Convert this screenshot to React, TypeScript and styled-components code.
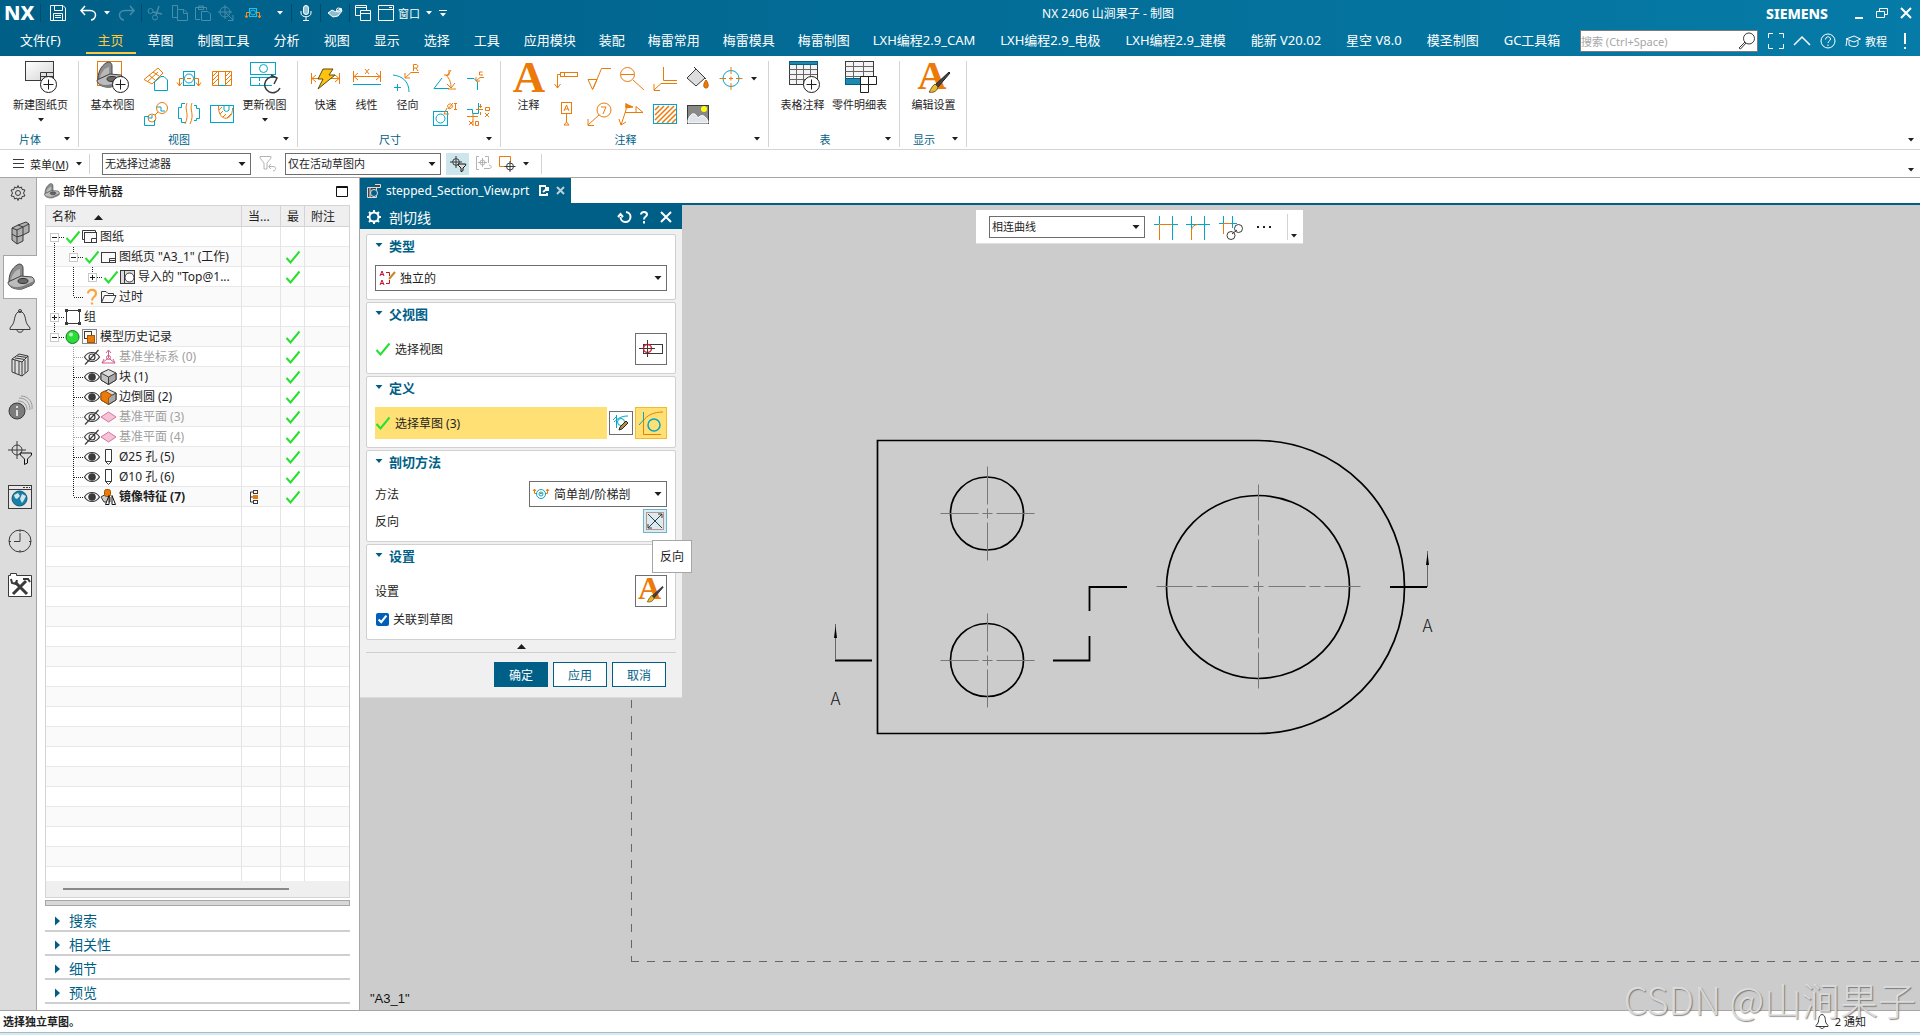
import React from 'react';
import styled, { createGlobalStyle, css } from 'styled-components';

const ORANGE = '#ec7a08';
const CYAN = '#00a5cc';
const INK = '#3a3a3a';
const BRAND = '#005f87';
const GREEN = '#25e02f';

const GlobalStyle = createGlobalStyle`
  *, *::before, *::after { box-sizing: border-box; }
  body { margin: 0; background: #fff; overflow: hidden; }
  body, button, input, select, table {
    font-family: "Noto Sans", "Noto Sans CJK SC", sans-serif;
    font-size: 12px;
    color: #1e1e1e;
  }
  button { border: 0; padding: 0; background: none; white-space: nowrap; }
  svg { display: block; flex: none; fill: none; stroke: currentColor; overflow: visible; }
`;

/* ---------- icons ---------- */

type IconProps = { w?: number; h?: number; c?: string; sw?: number; children: React.ReactNode };

const Icon = ({ w = 24, h, c = INK, sw = 1, children }: IconProps) => (
  <svg width={w} height={h ?? w} viewBox={`0 0 ${w} ${h ?? w}`} color={c} strokeWidth={sw} aria-hidden="true">
    {children}
  </svg>
);

const Caret = ({ wide = false, c = '#1e1e1e' }: { wide?: boolean; c?: string }) => (
  <Icon w={8} h={4} c={c}>
    <path d={wide ? 'M0.5 0H7.5L4 4Z' : 'M1 0H7L4 3.5Z'} fill={c} stroke="none" />
  </Icon>
);

const Check = () => (
  <Icon w={16} c={GREEN} sw={2}>
    <path d="M1.5 9L5.5 13.5L14.5 2.5" />
  </Icon>
);

const SerifA = ({ x, y, size }: { x: number; y: number; size: number }) => (
  <text x={x} y={y} fontSize={size} fontFamily="Liberation Serif, serif" fontWeight="700" fill={ORANGE} stroke="none" textAnchor="middle">A</text>
);

const Brush = () => (
  <>
    <path d="M32 11L18 24L21 26L33 12Z" fill="#444" stroke="#222" />
    <path d="M18 23L21 26C20 31 15 32 12 31C14 29 14 26 18 23Z" fill="#e6b93a" stroke="#6b5310" />
  </>
);

const Bracket = () => (
  <>
    <path d="M2 18C2 9 7 3 12 1C15 1 16 3 16 5V14L4 20Z" fill="#8e8e8e" stroke="#444" />
    <path d="M4 17C5 11 9 7 13 6V13Z" fill="#b8b8b8" stroke="none" />
    <path d="M1 19L14 13L25 14C28 16 28 20 25 22L15 26C8 27 1 24 1 19Z" fill="#bcbcbc" stroke="#444" />
    <path d="M1 19C2 24 10 25 16 23L27 18C28 20 27 21 25 22L15 26C8 27 1 24 1 19Z" fill="#7d7d7d" stroke="none" />
    <ellipse cx="16" cy="18" rx="5" ry="2.5" fill="#6a6a6a" stroke="#333" />
  </>
);

const PlusBadge = ({ x, y }: { x: number; y: number }) => (
  <>
    <circle cx={x} cy={y} r="8" fill="#fff" stroke="#1e1e1e" />
    <path d={`M${x - 5} ${y}H${x + 5}M${x} ${y - 5}V${y + 5}`} stroke="#1e1e1e" />
  </>
);

const big = {
  sheet: (
    <Icon w={34}>
      <defs>
        <linearGradient id="sheetFill" x1="0" y1="0" x2="1" y2="1">
          <stop offset="0" stopColor="#fff" /><stop offset="1" stopColor="#d4d4d4" />
        </linearGradient>
      </defs>
      <rect x="1.5" y="0.5" width="28" height="19" fill="url(#sheetFill)" />
      <path d="M16.5 19.5V11.5H29.5M16.5 15.5H29.5M22.5 11.5V19.5" />
      <PlusBadge x={24.5} y={23.5} />
    </Icon>
  ),
  base: (
    <Icon w={34}>
      <rect x="1.5" y="0.5" width="24" height="24" stroke={ORANGE} />
      <Bracket />
      <PlusBadge x={24.5} y={23.5} />
    </Icon>
  ),
  update: (
    <Icon w={34} c={CYAN}>
      <rect x="2.5" y="1.5" width="25" height="12" /><circle cx="15.5" cy="7.5" r="4" />
      <path d="M24 24.5H2.5V16.5H27" /><path d="M11.5 17V24" strokeDasharray="3 2" />
      <path d="M29 17A8 8 0 1 0 32 27M23 14L29 17L26 23" stroke={INK} strokeWidth="1.5" />
    </Icon>
  ),
  rapid: (
    <Icon w={34} c={ORANGE}>
      <path d="M2.5 12V23M30.5 12V23M3 17.5H30M7 14L3 17.5L7 21M26 14L30 17.5L26 21" />
      <path d="M14 8H24L20 14H26L9 28L14 18H9Z" fill="#ffc20e" stroke="#5a4a10" />
    </Icon>
  ),
  linear: (
    <Icon w={34} c={ORANGE}>
      <path d="M3.5 10V21M30.5 10V21M4 15.5H30M8 12L4 15.5L8 19M26 12L30 15.5L26 19M15 8L19 13M19 8L15 13" />
      <path d="M3 23.5H31" stroke={CYAN} />
    </Icon>
  ),
  radial: (
    <Icon w={34} c={CYAN}>
      <path d="M2 14C11 15 18 20 18 31M3 26.5H10M6.5 23V30" />
      <path d="M28 11.5H20L14 17M14 12V17H19M22.5 10V3.5H25C27.5 3.5 27.5 7 25 7H22.5M25 7L27 10" stroke={ORANGE} />
    </Icon>
  ),
  note: <Icon w={34}><SerifA x={17} y={31} size={45} /></Icon>,
  tableNote: (
    <Icon w={34}>
      <rect x="3.5" y="0.5" width="28" height="23" fill="#f4f4f4" />
      <rect x="3.5" y="0.5" width="28" height="3" fill="#1f88b0" stroke={BRAND} />
      <path d="M3.5 8.5H31M3.5 13.5H31M3.5 18.5H31M10.5 4V23M17.5 4V23M24.5 4V23" stroke="#666" />
      <PlusBadge x={25.5} y={23.5} />
    </Icon>
  ),
  parts: (
    <Icon w={34}>
      <rect x="2.5" y="0.5" width="28" height="23" fill="#f4f4f4" />
      <rect x="2.5" y="17.5" width="16" height="6" fill="#1f88b0" stroke={BRAND} />
      <path d="M2.5 5.5H30M2.5 10.5H30M2.5 15.5H30M10.5 0V17M20.5 0V15" stroke="#666" />
      <path d="M17.5 15.5H33.5V23.5H25.5V31.5H17.5ZM25.5 15.5V23.5H17.5" fill="#fff" stroke="#1e1e1e" />
    </Icon>
  ),
  edit: <Icon w={34}><SerifA x={15} y={28} size={40} /><Brush /></Icon>,
};

const viewIcons = [
  <Icon c={ORANGE}><path d="M0 12.5L14 1L19 6L8 17ZM5 8L11 13M9 5L15 9M3 15L14 5" /><path d="M10.5 23.5V15L17 9.5H20L23.5 13V23.5Z" fill="#fff" stroke={CYAN} /></Icon>,
  <Icon c={CYAN}><rect x="6.5" y="4.5" width="11" height="14" /><circle cx="12" cy="11.5" r="4.5" /><path d="M8 11.5H2.5V19M0 15.5L2.5 19L5 15.5M16 11.5H21.5V19M19 15.5L21.5 19L24 15.5M10 11.5H14" stroke={ORANGE} /></Icon>,
  <Icon c={ORANGE}><path d="M2.5 4.5H21.5V18.5H15.5V4.5M2.5 4.5V18.5H8.5V4.5M3 9L7 5M3 13L8 8M3 17L8 12M16 9L20 5M16 13L21 8M16 17L21 12" /><path d="M8 18.5H16" stroke={CYAN} /></Icon>,
  <Icon c={ORANGE}><circle cx="8" cy="16" r="4" /><circle cx="18" cy="6" r="5.5" /><path d="M11 13L14 10" /><path d="M5 14.5H0.5V23.5H10.5V18M8 13V16H4M13 5H17V9H21" stroke={CYAN} /></Icon>,
  <Icon c={CYAN}><path d="M8 1.5H4.5V5.5H1.5V16.5H4.5V20.5H9M17 3.5H19.5V6.5H22.5V16.5H19.5V18.5H17" /><path d="M10 1C7 8 13 12 8 22M15 1C12 8 18 12 13 22" stroke={ORANGE} /></Icon>,
  <Icon c={CYAN}><rect x="0.5" y="3.5" width="23" height="17" /><path d="M14 3.5V8A3 3 0 0 0 19 8V3.5" /><path d="M8.5 4C8 20 23 20 22.5 6M9 8L12 5M10 12L13 9M13 15L16 12M17 16L21 12" stroke={ORANGE} /></Icon>,
];

const dimensionIcons = [
  <Icon c={CYAN}><path d="M9 11L1 21.5H16" /><path d="M13 8C17 12 18 16 18 21M11 8H16V3M14 17L18 21L22 16M15 22H23M14 9L18 3" stroke={ORANGE} /></Icon>,
  <Icon c={CYAN}><path d="M1 11.5H8L11.5 15V23" /><path d="M18 10.5H14L10 14M10 10V14H14M16.5 5H13.5V8H17" stroke={ORANGE} /></Icon>,
  <Icon c={CYAN}><rect x="0.5" y="9.5" width="14" height="14" /><circle cx="7.5" cy="16.5" r="4.5" /><path d="M14 6L11 12H16M15 5.5A2 2 0 1 0 19 3A2 2 0 1 0 15 5.5M15 7L20 1M22.5 1V7M21 1.5H24M21 7.5H24" stroke={ORANGE} /></Icon>,
  <Icon c={CYAN}><path d="M1 7.5H6.5V11.5H12.5V1" /><path d="M13 4.5H16M10 7.5H17M14.5 2V6M14.5 10V13M1 14.5H12M7 12V24M3 19L7 23M7 19L3 23M9.5 19.5H12.5V23.5H9.5ZM19.5 5.5H23.5V8.5H19.5ZM19 11L23 15M23 11L19 15" stroke={ORANGE} /></Icon>,
];

const noteIcons = [
  <Icon c={ORANGE}><path d="M3.5 21V7.5H6.5M0.5 17L3.5 21L6.5 17" /><rect x="6.5" y="5.5" width="17" height="4" /><path d="M10.5 5V10" /></Icon>,
  <Icon c={ORANGE}><path d="M1 12.5H10L5.5 22.5ZM6 22L14.5 1.5H24" /></Icon>,
  <Icon c={ORANGE}><circle cx="7.5" cy="7.5" r="7" /><path d="M1 7.5H14M13 13L24 23" /></Icon>,
  <Icon c={ORANGE}><path d="M10.5 0V13.5H24M24 16.5H8L1 23M1 17V23.5H7" /></Icon>,
  <Icon><path d="M10 2L19 11L10 19L1 11Z" fill="#ddd" /><path d="M8 0L20 12" /><path d="M20 13C23 17 23 21 20 21C17 21 17 17 20 13Z" fill={ORANGE} stroke="#c65a00" /></Icon>,
  <Icon c={CYAN}><circle cx="12" cy="11.5" r="8" /><path d="M12 0V7M12 16V23M0.5 11.5H7M17 11.5H23.5M10 11.5H14M12 9.5V13.5" stroke={ORANGE} /></Icon>,
  <Icon c={ORANGE}><rect x="7.5" y="0.5" width="10" height="11" /><path d="M10 9L12.5 3L15 9M11 7H14M12.5 12V20M10 23L12.5 20L15 23Z" /></Icon>,
  <Icon c={ORANGE}><circle cx="17" cy="8" r="7" /><path d="M14 5H19L16 12M12 13L1 23M1 17V23.5H7" /></Icon>,
  <Icon c={ORANGE}><path d="M6 2L13 5L6 6Z" fill={ORANGE} /><path d="M6 1V8L1 23M-1 17L1 23L6 20M5 10.5H23L16 4.5V10" /></Icon>,
  <Icon c={ORANGE}><path d="M2 8L6 4M2 13L11 4M2 18L16 4M4 21L21 4M9 21L23 7M14 21L23 12M19 21L23 17" strokeWidth="1.5" /><rect x="0.5" y="2.5" width="23" height="19" stroke={CYAN} /></Icon>,
  <Icon><rect x="1.5" y="3.5" width="21" height="18" fill="#888" /><circle cx="18" cy="7" r="3" fill="#ff0" stroke="none" /><path d="M2 18C6 8 10 12 12 16C15 12 19 13 22 19V21H2Z" fill="#dfe4ea" stroke="#fff" /></Icon>,
];

/* ---------- title bar ---------- */

const Page = styled.div`
  height: 100vh;
  display: flex;
  flex-direction: column;
`;

const Header = styled.header`
  flex: none;
  background: linear-gradient(90deg, #005f87, #067ba7);
  color: #fff;
`;

const QuickRow = styled.div`
  height: 26px;
  display: flex;
  align-items: center;
  padding-left: 4px;
`;

const Logo = styled.strong`
  width: 36px;
  font-size: 20px;
  font-weight: 800;
  line-height: 26px;
`;

const Divider = styled.span<{ $h?: number; $dark?: boolean; $gap?: number }>`
  width: 1px;
  height: ${p => p.$h ?? 18}px;
  flex: none;
  margin: 0 ${p => p.$gap ?? 0}px;
  background: ${p => (p.$dark ? '#004a6b' : '#d4d4d4')};
`;

const QuickButton = styled.button<{ $dim?: boolean; $w?: number }>`
  width: ${p => p.$w ?? 23}px;
  height: 24px;
  display: flex;
  align-items: center;
  justify-content: center;
  gap: 4px;
  color: #fff;
  font-size: 11px;
  opacity: ${p => (p.$dim ? 0.28 : 1)};
`;

const WindowTitle = styled.h1`
  flex: 1;
  margin: 0;
  font-size: 12px;
  font-weight: 400;
  text-align: center;
`;

const Siemens = styled.strong`
  width: 76px;
  padding-top: 2px;
  font-size: 14px;
  line-height: 18px;
  font-weight: 800;
`;

const MenuRow = styled.nav`
  height: 30px;
  display: flex;
  align-items: center;
  padding-left: 8px;
`;

const MenuTab = styled.button<{ $active?: boolean; $file?: boolean; $end?: number }>`
  height: 28px;
  align-self: flex-start;
  padding: 0 ${p => p.$end ?? 12}px 0 12px;
  margin-right: ${p => (p.$file ? 13 : 0)}px;
  font-size: 13px;
  color: ${p => (p.$active ? '#ffc843' : '#fff')};
  border-bottom: 2px solid ${p => (p.$active ? '#ffc843' : 'transparent')};
`;

const SearchBox = styled.label`
  width: 178px;
  height: 22px;
  margin-left: auto;
  display: flex;
  align-items: center;
  background: #fff;
  border: 1px solid #7a7a7a;
  color: ${INK};
  input {
    flex: 1;
    min-width: 0;
    padding: 0;
    border: 0;
    outline: 0;
    font-size: 11px;
  }
  input::placeholder { color: #a6a6a6; opacity: 1; }
`;

const HeaderTools = styled.div`
  width: 162px;
  display: flex;
  align-items: center;
  padding-left: 5px;
`;

const W = ({ w = 16, children }: { w?: number; children: React.ReactNode }) => <Icon w={w} h={16} c="#fff">{children}</Icon>;

const basicMenus = ['草图', '制图工具', '分析', '视图', '显示', '选择', '工具'];
const moduleMenus = ['应用模块', '装配', '梅雷常用', '梅雷模具', '梅雷制图'];
const pluginMenus = ['LXH编程2.9_CAM', 'LXH编程2.9_电极', 'LXH编程2.9_建模', '能新 V20.02', '星空 V8.0', '模圣制图', 'GC工具箱'];

const TitleBar = () => (
  <Header>
    <QuickRow>
      <Logo>NX</Logo>
      <Divider $dark />
      <QuickButton $w={34} aria-label="保存"><W><path d="M0.5 0.5H13L15.5 3V15.5H0.5ZM4.5 1V5.5H12.5V1M3.5 15V8.5H12.5V15M5 10.5H11M5 12.5H11" /></W></QuickButton>
      <QuickButton $w={26} aria-label="撤销"><W><path d="M5 1L1 5.5L5 10M1 5.5H10C14 5.5 15.5 8 15.5 10C15.5 13 13 15 11 15" strokeWidth="1.5" /></W></QuickButton>
      <QuickButton $w={12} aria-label="撤销列表"><Caret c="#fff" /></QuickButton>
      <QuickButton $w={28} $dim aria-label="重做"><W><path d="M11 1L15 5.5L11 10M15 5.5H6C2 5.5 0.5 8 0.5 10C0.5 13 3 15 5 15" strokeWidth="1.5" /></W></QuickButton>
      <Divider $dark />
      <QuickButton $w={26} $dim aria-label="剪切"><W><circle cx="3.5" cy="6" r="2.5" /><circle cx="8" cy="12.5" r="2.5" /><path d="M6 7L15 9M9 10L12 1" strokeWidth="1.5" /></W></QuickButton>
      <QuickButton $dim aria-label="复制"><W><path d="M5.5 4V0.5H0.5V12.5H5M5.5 4.5H12L15.5 8V15.5H5.5ZM11.5 5V8.5H15" /></W></QuickButton>
      <QuickButton $dim aria-label="粘贴"><W><path d="M5 14.5H0.5V2.5H11.5V5M3.5 4.5V1H8.5V4.5ZM6.5 6.5H13L15.5 9V15.5H6.5Z" /></W></QuickButton>
      <QuickButton $dim aria-label="移动"><W><circle cx="7" cy="7" r="5" /><path d="M7 0V14M0 7H14M8 8L15 15M15 10V15.5H10" /></W></QuickButton>
      <QuickButton $w={32} aria-label="剖切线">
        <Icon w={16} c="#19c3ec"><rect x="4.5" y="3.5" width="7" height="8" /><circle cx="8" cy="7.5" r="2.5" /><path d="M5 7.5H1.5V13M0 10.5L1.5 13L3 10.5M11 7.5H14.5V13M13 10.5L14.5 13L16 10.5" stroke="#ff8a1c" /></Icon>
      </QuickButton>
      <QuickButton $w={22} aria-label="剖切线列表"><Caret c="#fff" /></QuickButton>
      <Divider $dark />
      <QuickButton $w={28} aria-label="语音"><W w={12}><rect x="3.5" y="0.5" width="5" height="9" rx="2.5" fill="#9cc3d3" /><path d="M1 6V8C1 13 11 13 11 8V6M6 12V15M3 15.5H9" /></W></QuickButton>
      <Divider $dark />
      <QuickButton $w={28} aria-label="触控"><W><path d="M1 8L5 5L9 7L14 3L15 6L11 11L6 12Z" fill="#8fbccd" /><circle cx="11.5" cy="5" r="2" /></W></QuickButton>
      <Divider $dark />
      <QuickButton $w={26} aria-label="切换窗口"><W><path d="M5 10.5H0.5V0.5H11.5V5M0.5 2.5H11M9 15.5H5.5V5.5H15.5V15.5H9M5.5 8.5H15" /></W></QuickButton>
      <QuickButton $w={46}><W><path d="M0.5 0.5H15.5V15.5H0.5ZM0.5 4.5H15M11 2.5H14" /></W>窗口</QuickButton>
      <QuickButton $w={14} aria-label="窗口列表"><Caret c="#fff" /></QuickButton>
      <QuickButton $w={14} aria-label="自定义"><Icon w={8} h={7} c="#fff"><path d="M0 0.5H8" /><path d="M1 3H7L4 6.5Z" fill="#fff" stroke="none" /></Icon></QuickButton>
      <WindowTitle>NX 2406 山涧果子 - 制图</WindowTitle>
      <Siemens>SIEMENS</Siemens>
      <QuickButton $w={30} aria-label="最小化"><Icon w={12} c="#fff" sw={2}><path d="M4 11H12" /></Icon></QuickButton>
      <QuickButton $w={20} aria-label="还原"><Icon w={12} c="#fff"><path d="M3.5 4V1.5H11.5V7.5H8.5M0.5 4.5H8.5V10.5H0.5Z" /></Icon></QuickButton>
      <QuickButton $w={28} aria-label="关闭"><Icon w={12} c="#fff" sw={2}><path d="M1 1L11 11M11 1L1 11" /></Icon></QuickButton>
    </QuickRow>
    <MenuRow>
      <MenuTab $file>文件(F)</MenuTab>
      <MenuTab $active>主页</MenuTab>
      {basicMenus.map(m => <MenuTab key={m}>{m}</MenuTab>)}
      {moduleMenus.map(m => <MenuTab key={m} $end={11}>{m}</MenuTab>)}
      {pluginMenus.map(m => <MenuTab key={m} $end={13}>{m}</MenuTab>)}
      <SearchBox>
        <input type="text" placeholder="搜索 (Ctrl+Space)" aria-label="搜索" />
        <Icon w={20} h={18}><circle cx="12" cy="6.5" r="5.5" /><path d="M8 10L2 16L3.5 17L9 11" /></Icon>
      </SearchBox>
      <HeaderTools>
        <QuickButton $w={26} aria-label="全屏"><W><path d="M0.5 5V0.5H5M11 0.5H15.5V5M15.5 11V15.5H11M5 15.5H0.5V11" /></W></QuickButton>
        <QuickButton $w={26} aria-label="折叠功能区"><W><path d="M0 12L8 4L16 12" strokeWidth="1.5" /></W></QuickButton>
        <QuickButton $w={26} aria-label="帮助"><W><circle cx="8" cy="8" r="7" /><path d="M5.5 6.5C5.5 3 10.5 3 10.5 6C10.5 8 8 8 8 10M8 11.5V13" /></W></QuickButton>
        <QuickButton $w={50}><W><path d="M1 6L9 3L15.5 6L9 9ZM4 8V12C7 14 11 14 13 12V8M2 7L1 13" /></W>教程</QuickButton>
        <QuickButton $w={28} aria-label="提醒"><Icon w={4} h={16} c="#fff" sw={2}><path d="M2 0V11M2 14V16" /></Icon></QuickButton>
      </HeaderTools>
    </MenuRow>
  </Header>
);

/* ---------- ribbon ---------- */

const Ribbon = styled.section`
  flex: none;
  height: 94px;
  display: flex;
  padding: 5px 0 2px;
  border-bottom: 1px solid #d4d4d4;
`;

const Group = styled.div`
  display: flex;
  flex-direction: column;
  justify-content: space-between;
  border-right: 1px solid #d4d4d4;
`;

const GroupBody = styled.div<{ $pad: string }>`
  display: flex;
  align-items: flex-start;
  padding: ${p => p.$pad};
`;

const GroupCaption = styled.div`
  display: flex;
  align-items: center;
  height: 16px;
  color: ${BRAND};
  font-size: 11px;
  span { flex: 1; text-align: center; }
  button { width: 18px; height: 16px; display: flex; align-items: center; padding-left: 3px; }
`;

const BigButton = styled.button<{ $w: number }>`
  width: ${p => p.$w}px;
  height: 68px;
  display: flex;
  flex-direction: column;
  align-items: center;
  font-size: 11px;
  line-height: 16px;
  span { margin: 2px 0 5px; }
`;

const IconGrid = styled.div<{ $cols: number }>`
  display: grid;
  grid-template-columns: repeat(${p => p.$cols}, 33px);
  grid-auto-rows: 35px;
  button { display: grid; place-items: center; }
`;

const GridMore = styled.button`
  width: 14px;
  height: 35px;
  display: grid;
  place-items: center;
`;

const CornerArrow = styled.button`
  margin-left: auto;
  padding: 0 5px 5px 0;
  align-self: flex-end;
`;

type RibbonGroupProps = { title: string; pad: string; children: React.ReactNode };
const RibbonGroup = ({ title, pad, children }: RibbonGroupProps) => (
  <Group>
    <GroupBody $pad={pad}>{children}</GroupBody>
    <GroupCaption><span>{title}</span><button aria-label={`${title}选项`}><Caret /></button></GroupCaption>
  </Group>
);

const Tool = ({ w, icon, label, more }: { w: number; icon: React.ReactNode; label: string; more?: boolean }) => (
  <BigButton $w={w}>{icon}<span>{label}</span>{more && <Caret />}</BigButton>
);

const Icons = ({ cols, items, name }: { cols: number; items: React.ReactNode[]; name: string }) => (
  <IconGrid $cols={cols}>
    {items.map((icon, i) => <button key={i} aria-label={`${name} ${i + 1}`}>{icon}</button>)}
  </IconGrid>
);

const RibbonBar = () => (
  <Ribbon>
    <RibbonGroup title="片体" pad="0 7px 0 10px">
      <Tool w={61} icon={big.sheet} label="新建图纸页" more />
    </RibbonGroup>
    <RibbonGroup title="视图" pad="0 6px 0 7px">
      <Tool w={53} icon={big.base} label="基本视图" />
      <Icons cols={3} items={viewIcons} name="视图工具" />
      <Tool w={53} icon={big.update} label="更新视图" more />
    </RibbonGroup>
    <RibbonGroup title="尺寸" pad="0 6px 0 7px">
      <Tool w={41} icon={big.rapid} label="快速" />
      <Tool w={41} icon={big.linear} label="线性" />
      <Tool w={41} icon={big.radial} label="径向" />
      <Icons cols={2} items={dimensionIcons} name="尺寸工具" />
    </RibbonGroup>
    <RibbonGroup title="注释" pad="0 7px 0 7px">
      <Tool w={41} icon={big.note} label="注释" />
      <Icons cols={6} items={noteIcons} name="注释工具" />
      <GridMore aria-label="中心标记列表"><Caret /></GridMore>
    </RibbonGroup>
    <RibbonGroup title="表" pad="0 9px 0 7px">
      <Tool w={53} icon={big.tableNote} label="表格注释" />
      <Tool w={61} icon={big.parts} label="零件明细表" />
    </RibbonGroup>
    <RibbonGroup title="显示" pad="0 6px 0 7px">
      <Tool w={53} icon={big.edit} label="编辑设置" />
    </RibbonGroup>
    <CornerArrow aria-label="功能区选项"><Caret /></CornerArrow>
  </Ribbon>
);

/* ---------- selection bar ---------- */

const FilterBar = styled.section`
  flex: none;
  height: 28px;
  display: flex;
  align-items: center;
  padding-left: 13px;
  border-bottom: 1px solid #a6a6a6;
`;

const MenuButton = styled.button`
  width: 76px;
  display: flex;
  align-items: center;
  gap: 6px;
  font-size: 11px;
`;

const SelectFrame = styled.div<{ $w?: number; $h?: number; $icon?: boolean }>`
  position: relative;
  width: ${p => (p.$w ? `${p.$w}px` : '100%')};
  height: ${p => p.$h ?? 22}px;
  flex: none;
  select {
    width: 100%;
    height: 100%;
    appearance: none;
    border: 1px solid #6e6e6e;
    border-radius: 0;
    background: #fff;
    font-size: ${p => (p.$h ? 12 : 11)}px;
    padding: 0 18px 0 ${p => (p.$icon ? 24 : 2)}px;
  }
`;

const SelectMark = styled.span<{ $left?: boolean }>`
  position: absolute;
  top: 0;
  bottom: 0;
  ${p => (p.$left ? css`left: 4px;` : css`right: 5px;`)}
  display: flex;
  align-items: center;
  pointer-events: none;
`;

type DropProps = { w?: number; h?: number; value: string; label: string; id?: string; icon?: React.ReactNode };
const Drop = ({ w, h, value, label, id, icon }: DropProps) => (
  <SelectFrame $w={w} $h={h} $icon={!!icon}>
    <select id={id} aria-label={label}><option>{value}</option></select>
    {icon && <SelectMark $left>{icon}</SelectMark>}
    <SelectMark><Caret wide /></SelectMark>
  </SelectFrame>
);

const FlatButton = styled.button<{ $w: number; $on?: boolean }>`
  width: ${p => p.$w}px;
  height: 22px;
  display: grid;
  place-items: center;
  background: ${p => (p.$on ? '#cde6eb' : 'none')};
`;

const Funnel = ({ size = 16, c = INK }: { size?: number; c?: string }) => (
  <svg width={size} height={size} viewBox="0 0 24 24" color={c} strokeWidth={size > 20 ? 1 : 1.5} aria-hidden="true">
    <path d="M9 0V18M0 9H18" /><circle cx="9" cy="9" r="5" />
    <path d="M12 12H23.5V14L19.5 18V22L16.5 23.5V18L12.5 14Z" fill="#ddd" stroke="#111" />
  </svg>
);

const SelectionBar = () => (
  <FilterBar>
    <MenuButton>
      <Icon w={11}><path d="M0 1.5H11M0 5.5H11M0 9.5H11" /></Icon>
      <span>菜单(<u>M</u>)</span>
      <Caret />
    </MenuButton>
    <Divider $h={20} />
    <FlatButton as="span" $w={12} />
    <Drop w={149} value="无选择过滤器" label="选择过滤器" />
    <FlatButton $w={34} aria-label="重置过滤器"><Icon w={18} c="#b4b4b4"><path d="M1 1.5H12V3L8 8V14H5V8L1 3ZM10 11.5H14C18 11.5 17 16 14 16M12 9L9.5 11.5L12 14" /></Icon></FlatButton>
    <Drop w={156} value="仅在活动草图内" label="选择范围" />
    <FlatButton as="span" $w={5} />
    <FlatButton $w={23} $on aria-label="捕捉过滤"><Funnel /></FlatButton>
    <FlatButton $w={28} aria-label="整体选择"><Icon w={17} c="#b4b4b4"><path d="M4 1.5H1.5V14.5H4M10 1.5H13.5V8M7.5 3V12M3 7.5H12M9 13.5H14C17 13.5 17 10 14 10" /><circle cx="7.5" cy="7.5" r="2.5" /></Icon></FlatButton>
    <FlatButton $w={20} aria-label="选择点"><Icon w={18}><path d="M7 11.5H1.5V1.5H12.5V7" stroke={ORANGE} /><circle cx="12" cy="11.5" r="3.5" /><path d="M12 6V17M6.5 11.5H17.5" /></Icon></FlatButton>
    <FlatButton $w={18} aria-label="更多"><Caret /></FlatButton>
    <Divider $h={20} $gap={6} />
    <CornerArrow aria-label="选择条选项"><Caret /></CornerArrow>
  </FilterBar>
);

/* ---------- resource bar ---------- */

const Main = styled.main`
  flex: 1;
  min-height: 0;
  display: flex;
`;

const Resource = styled.aside`
  width: 37px;
  flex: none;
  display: flex;
  flex-direction: column;
  background: #dcdcdc;
  border-right: 1px solid #a6a6a6;
`;

const ResourceButton = styled.button<{ $small?: boolean; $on?: boolean }>`
  height: ${p => (p.$small ? 33 : 44)}px;
  display: grid;
  place-items: center;
  padding: ${p => (p.$small ? '0 0 4px' : '0 0 0 3px')};
  ${p => p.$on && css`
    background: #fff;
    border: 1px solid #a6a6a6;
    border-right: 0;
    margin: 0 -1px 0 3px;
    padding: 0;
  `}
`;

const gear = 'M8 0.5L9 3L11.5 2L12 4.5L15 5L13.5 8L15 11L12 11.5L11.5 14L9 13L8 15.5L7 13L4.5 14L4 11.5L1 11L2.5 8L1 5L4 4.5L4.5 2L7 3Z';

const resources: [string, React.ReactNode][] = [
  ['设置', <Icon w={16}><path d={gear} /><circle cx="8" cy="8" r="2.5" /></Icon>],
  ['装配导航器', <Icon w={24}><path d="M4 7L10 4L18 1L21 3V11L15 14V20L9 23L4 19Z" fill="#b0b0b0" /><path d="M4 7L9 9L21 3M9 9V23M15 6V14L9 16L4 13M10 4L15 6" /></Icon>],
  ['部件导航器', <Icon w={28}><Bracket /></Icon>],
  ['通知', <Icon w={24}><path d="M12 2.5C6 3 7 12 5 15L2 19V20.5H22V19L19 15C17 12 18 3 12 2.5ZM9 21C9 24 15 24 15 21" /><circle cx="12" cy="2" r="1.5" /></Icon>],
  ['重用库', <Icon w={24}><path d="M4 6L11 1L20 3V18L14 23L4 19ZM4 6L14 9V23M14 9L20 3M7 5L17 6.5M9 3L19 4.5M7 7V20M11 8V22M17 7V20" /></Icon>],
  ['信息', <Icon w={26}><circle cx="10" cy="15" r="8" fill="#7c7c7c" /><path d="M10 10V12M10 14V20" stroke="#fff" strokeWidth="1.5" /><path d="M11 5C17 5 20 9 20 14M12 2C20 2 23 8 23 14M14 0C22 0 26 7 25 13" stroke="#999" /></Icon>],
  ['选择过滤', <Funnel size={24} />],
  ['浏览器', <Icon w={24}><rect x="0.5" y="0.5" width="23" height="23" fill="#e8e8e8" /><path d="M0.5 4.5H23M15 2.5H17M18 2.5H20M21 2.5H22" /><circle cx="11.5" cy="13.5" r="7.5" fill="#1880a8" stroke="#145a78" /><path d="M6 10L10 8L12 11L9 14L7 13ZM14 9L18 11L16 15L14 18L12 14Z" fill="#d3e6ee" stroke="none" /></Icon>],
  ['历史', <Icon w={24}><circle cx="12" cy="12" r="11" /><path d="M12 4V12.5H6M12 1V3M12 21V23M1 12.5H3M21 12.5H23" /></Icon>],
  ['工具', <Icon w={24}><path d="M0.5 23.5V2.5H2.5V0.5H8.5V2.5H23.5V23.5Z" fill="#fff" /><path d="M7 9L19 21M18 8L5 21" strokeWidth="3" /><path d="M3 6L4 10L8 11L9 7M15 6H20L22 9" strokeWidth="2" /></Icon>],
];

/* ---------- part navigator ---------- */

const Navigator = styled.section`
  width: 323px;
  flex: none;
  display: flex;
  flex-direction: column;
  padding: 0 9px 6px 8px;
  border-right: 1px solid #a6a6a6;
`;

const NavTitle = styled.h2`
  height: 27px;
  margin: 0;
  padding: 0 1px 2px 0;
  flex: none;
  display: flex;
  align-items: center;
  gap: 2px;
  font-size: 12px;
  font-weight: 500;
  span { flex: 1; }
`;

const TreeFrame = styled.div`
  flex: 1;
  min-height: 0;
  overflow: hidden;
  border: 1px solid #d4d4d4;
  border-bottom: 0;
`;

const TreeTable = styled.table`
  width: 100%;
  table-layout: fixed;
  border-collapse: separate;
  border-spacing: 0;
  th, td {
    height: 20px;
    padding: 0;
    border-right: 1px solid #e4e4e4;
    border-bottom: 1px solid #e9e9e9;
    font-weight: 400;
    text-align: left;
    line-height: 16px;
    white-space: nowrap;
    overflow: hidden;
  }
  th { height: 21px; background: #efefef; padding: 2px 0 0 6px; border-color: #d4d4d4; }
  th:last-child, td:last-child { border-right: 0; }
  tbody tr:nth-child(even) { background: #fafafa; }
  td svg { margin: 0 auto; }
`;

const Head = styled.span`
  display: flex;
  align-items: center;
  gap: 18px;
`;

const Cell = styled.div<{ $muted?: boolean; $bold?: boolean }>`
  height: 19px;
  display: flex;
  align-items: center;
  color: ${p => (p.$muted ? '#a0a0a0' : 'inherit')};
  font-weight: ${p => (p.$bold ? 700 : 400)};
  && svg { margin: 0; }
`;

const SideMark = styled.div`
  padding-left: 7px;
  && svg { margin: 0; }
`;

const TreeLabel = styled.span`
  padding-left: 2px;
`;

type Line = ' ' | '|' | 'T' | 'L' | '+' | '-' | '^' | '~';
const Guide = ({ kind }: { kind: Line }) => (
  <svg width="19" height="20" viewBox="0 0 19 20" aria-hidden="true" stroke="#999" strokeDasharray="1 1">
    {'|T~'.includes(kind) && <path d="M8.5 0V20" />}
    {'L+-'.includes(kind) && <path d="M8.5 0V10" />}
    {kind === '^' && <path d="M8.5 10V20" />}
    {kind !== ' ' && kind !== '|' && <path d="M9 10.5H18" />}
    {'+-^~'.includes(kind) && (
      <g strokeDasharray="none">
        <rect x="4.5" y="6.5" width="8" height="8" fill="#fff" stroke="#c8c8c8" />
        <path d={kind === '+' || kind === '~' ? 'M6 10.5H11M8.5 8V13' : 'M6 10.5H11'} stroke="#1e1e1e" />
      </g>
    )}
  </svg>
);

const eye = (
  <Icon w={16} sw={1.2}><path d="M0.5 8C4 2 12 2 15.5 8C12 14 4 14 0.5 8Z" /><circle cx="8" cy="8" r="3.2" fill={INK} /></Icon>
);
const eyeOff = (
  <Icon w={16} sw={1.2}><path d="M0.5 8C4 2 12 2 15.5 8C12 14 4 14 0.5 8Z" /><circle cx="8" cy="8" r="3" /><path d="M1 15.5L14.5 1" /></Icon>
);
const plane = <Icon w={17} h={16} c="#d9709c"><path d="M1 8L8.5 3L16 8L8.5 13Z" fill="#f4c3d6" /></Icon>;
const hole = <Icon w={17} h={16}><path d="M5.5 0.5H11.5V12.5L8.5 15.5L5.5 12.5ZM5.5 12.5H11.5" fill="#fff" /></Icon>;
const sheetIcon = <Icon w={17} h={16}><rect x="1.5" y="3.5" width="14" height="10" fill="#fafafa" /><path d="M9.5 13V9.5H15M9.5 11.5H15" /></Icon>;
const cube = (hot: boolean) => (
  <Icon w={17} h={16}>
    <path d="M8.5 0.5L16 4V11L8.5 15.5L1 11V4Z" fill="#dcdcdc" />
    <path d="M8.5 8L16 4V11L8.5 15.5Z" fill="#a8a8a8" />
    <path d={hot ? 'M1 4L5 2L12 6L8.5 9V15L1 11Z' : 'M1 4L8.5 8V15.5L1 11Z'} fill={hot ? ORANGE : '#c4c4c4'} stroke={hot ? '#a85400' : INK} />
  </Icon>
);

type TreeRow = { lines: string; state?: React.ReactNode; icon: React.ReactNode; text: string; done?: boolean; muted?: boolean; bold?: boolean };

const rows: TreeRow[] = [
  { lines: '^', state: <Check />, icon: <Icon w={17} h={16}><path d="M3.5 10.5H1.5V1.5H14.5V3" /><rect x="3.5" y="3.5" width="12" height="10" fill="#fafafa" /><path d="M10.5 13V9.5H15" /></Icon>, text: '图纸' },
  { lines: '|-', state: <Check />, icon: sheetIcon, text: '图纸页 "A3_1" (工作)', done: true },
  { lines: '||+', state: <Check />, icon: <Icon w={17} h={16}><rect x="1.5" y="1.5" width="14" height="13" fill="#dcdcdc" /><path d="M5.5 1V15" /><circle cx="10.5" cy="8.5" r="4.5" fill="#fff" /></Icon>, text: '导入的 "Top@1...', done: true },
  { lines: '|L', state: <Icon w={16} c="#fba63a" sw={2.2}><path d="M4 4.5C4 -0.5 12 0 12 4.5C12 8 8 7.5 8 11.5M8 13.5V15.5" /></Icon>, icon: <Icon w={17} h={16}><path d="M1.5 13.5V2.5H6L8 4.5H13.5V6.5M1.5 13.5H13L16 6.5H4.5Z" /></Icon>, text: '过时' },
  { lines: '~', icon: <Icon w={17} h={16}><path d="M1.5 1.5H14.5V14.5H1.5Z" /><path d="M0 0H3V3H0ZM13 0H16V3H13ZM0 13H3V16H0ZM13 13H16V16H13Z" fill={INK} stroke="none" /></Icon>, text: '组' },
  { lines: '-', state: <Icon w={16}><circle cx="7.5" cy="8" r="6.5" fill="#2bdc3a" stroke="#157a1c" /><circle cx="6" cy="5.5" r="2" fill="#b5f7b9" stroke="none" /></Icon>, icon: <Icon w={17} h={16}><rect x="1.5" y="0.5" width="14" height="14" stroke="#888" /><rect x="3.5" y="2.5" width="7" height="7" fill="#fff" /><rect x="6.5" y="6.5" width="7" height="7" fill={ORANGE} stroke="#a85400" /></Icon>, text: '模型历史记录', done: true },
  { lines: ' T', state: eyeOff, icon: <Icon w={17} h={16} c="#d0608f"><path d="M8.5 1V9L2 14H15L8.5 9M6 4L8.5 1L11 4M4 10L2 14M13 10L15 14" /><circle cx="8.5" cy="8.5" r="2" /></Icon>, text: '基准坐标系 (0)', done: true, muted: true },
  { lines: ' T', state: eye, icon: cube(false), text: '块 (1)', done: true },
  { lines: ' T', state: eye, icon: cube(true), text: '边倒圆 (2)', done: true },
  { lines: ' T', state: eyeOff, icon: plane, text: '基准平面 (3)', done: true, muted: true },
  { lines: ' T', state: eyeOff, icon: plane, text: '基准平面 (4)', done: true, muted: true },
  { lines: ' T', state: eye, icon: hole, text: 'Ø25 孔 (5)', done: true },
  { lines: ' T', state: eye, icon: hole, text: 'Ø10 孔 (6)', done: true },
  { lines: ' L', state: eye, icon: <Icon w={17} h={16}><path d="M1 8L6 5L10 8V13L4 13Z" fill="#ccc" /><rect x="4.5" y="0.5" width="6" height="7" rx="2" fill={ORANGE} stroke="#a85400" /><path d="M9 6.5V15.5H5.5ZM12 6.5V15.5H15.5Z" fill="#fff" stroke="#111" /></Icon>, text: '镜像特征 (7)', done: true, bold: true },
];

const blanks = Array.from({ length: 40 }, (_, i) => i);

const ScrollTrack = styled.div`
  flex: none;
  height: 17px;
  padding: 7px 60px 8px 17px;
  background: #efefef;
  border: 1px solid #d4d4d4;
  border-top: 0;
  &::before { content: ''; display: block; height: 2px; background: #8a8a8a; }
`;

const Splitter = styled.div`
  flex: none;
  height: 6px;
  margin: 2px 0;
  background: #d8d8d8;
  border: 1px solid #a6a6a6;
`;

const FoldButton = styled.button`
  flex: none;
  height: 24px;
  display: flex;
  align-items: center;
  gap: 9px;
  padding: 3px 0 0 10px;
  font-size: 14px;
  line-height: 19px;
  color: ${BRAND};
  border-bottom: 2px solid #cfcfcf;
`;

const PartNavigator = () => (
  <Navigator>
    <NavTitle>
      <svg width="16" height="16" viewBox="2 0 28 28" aria-hidden="true"><Bracket /></svg>
      <span>部件导航器</span>
      <Icon w={14} h={12} sw={1} c="#111"><path d="M1.5 1.5H12.5V11.5H1.5ZM1.5 2.5H12.5" /></Icon>
    </NavTitle>
    <TreeFrame>
      <TreeTable>
        <colgroup><col /><col width="39" /><col width="24" /><col width="44" /></colgroup>
        <thead>
          <tr>
            <th><Head>名称<Icon w={9} h={5}><path d="M0 5L4.5 0L9 5Z" fill="#1e1e1e" stroke="none" /></Icon></Head></th>
            <th>当...</th><th>最</th><th>附注</th>
          </tr>
        </thead>
        <tbody>
          {rows.map(r => (
            <tr key={r.text}>
              <td>
                <Cell $muted={r.muted} $bold={r.bold}>
                  {[...r.lines].map((k, i) => <Guide key={i} kind={k as Line} />)}
                  {r.state}{r.icon}<TreeLabel>{r.text}</TreeLabel>
                </Cell>
              </td>
              <td>{r.bold && <SideMark><Icon w={10} h={16}><path d="M5 3H1.5V13H5M1.5 8H5" /><rect x="4.5" y="1.5" width="4" height="3" /><rect x="4.5" y="6.5" width="4" height="3" fill={ORANGE} stroke={ORANGE} /><rect x="4.5" y="11.5" width="4" height="3" /></Icon></SideMark>}</td>
              <td>{r.done && <Check />}</td>
              <td />
            </tr>
          ))}
          {blanks.map(i => <tr key={i}><td /><td /><td /><td /></tr>)}
        </tbody>
      </TreeTable>
    </TreeFrame>
    <ScrollTrack />
    <Splitter />
    {['搜索', '相关性', '细节', '预览'].map(t => (
      <FoldButton key={t}><Icon w={5} h={10} c={BRAND}><path d="M0 0.5L5 5L0 9.5Z" fill={BRAND} stroke="none" /></Icon>{t}</FoldButton>
    ))}
  </Navigator>
);

/* ---------- document ---------- */

const Document = styled.section`
  flex: 1;
  min-width: 0;
  display: flex;
  flex-direction: column;
`;

const TabStrip = styled.div`
  height: 27px;
  flex: none;
  display: flex;
  border-bottom: 2px solid ${BRAND};
`;

const DocTab = styled.div`
  display: flex;
  align-items: center;
  gap: 5px;
  padding: 0 6px 0 7px;
  background: ${BRAND};
  color: #fff;
  font-size: 12px;
  span { padding-right: 5px; }
`;

const Canvas = styled.div`
  position: relative;
  flex: 1;
  min-height: 0;
  background: #ccc;
`;

const Drawing = styled.svg`
  position: absolute;
  inset: 0;
  width: 100%;
  height: 100%;
  stroke: #000;
  && { overflow: hidden; }
  text { fill: #111; stroke: none; }
`;

const CrossHair = ({ x, y, parts }: { x: number; y: number; parts: [number, number][] }) => (
  <g stroke="#777" strokeWidth="1">
    <path d={`M${x - 5} ${y}H${x + 5}M${x} ${y - 5}V${y + 5}`} />
    {parts.map(([a, b]) => (
      <path key={a} d={`M${x + a} ${y}H${x + b}M${x - a} ${y}H${x - b}M${x} ${y + a}V${y + b}M${x} ${y - a}V${y - b}`} />
    ))}
  </g>
);

const ViewArrow = ({ x, y }: { x: number; y: number }) => (
  <g>
    <path d={`M${x} ${y}V${y - 36}`} stroke="#666" strokeWidth="1" />
    <path d={`M${x - 1.5} ${y - 22}L${x} ${y - 34}L${x + 1.5} ${y - 22}Z`} fill="#000" stroke="none" />
    <text x={x} y={y + 45} fontSize="17" fontFamily="Noto Sans CJK SC, sans-serif" fontWeight="300" textAnchor="middle">A</text>
  </g>
);

const Part = () => (
  <Drawing viewBox="360 205 1560 805" preserveAspectRatio="xMinYMin meet" role="img" aria-label="图纸">
    <path d="M631.5 604V961" stroke="#666" strokeDasharray="8 8" />
    <path d="M631 961.5H1920" stroke="#666" strokeDasharray="8 8" />
    <g strokeWidth="1.7">
      <path d="M877.5 440.5H1258A146.5 146.5 0 0 1 1258 733.5H877.5Z" />
      <circle cx="987" cy="513.5" r="36.5" />
      <circle cx="987" cy="660" r="36.5" />
      <circle cx="1258" cy="587" r="91.5" />
    </g>
    <CrossHair x={987.5} y={513.5} parts={[[9, 47]]} />
    <CrossHair x={987.5} y={660.5} parts={[[9, 47]]} />
    <CrossHair x={1258.5} y={586.5} parts={[[10, 47], [51, 62], [66, 102]]} />
    <path d="M835 660.5H872M1053 660.5H1089.5V636M1089.5 611V587H1127M1390 587H1427" strokeWidth="1.8" />
    <ViewArrow x={835.5} y={660} />
    <ViewArrow x={1427.5} y={587} />
    <text x="370" y="1003" fontSize="13" fontFamily="Liberation Sans, Arial, sans-serif">"A3_1"</text>
  </Drawing>
);

const FloatBar = styled.div`
  position: absolute;
  top: 5px;
  left: 616px;
  height: 33px;
  display: flex;
  align-items: center;
  padding: 0 0 0 13px;
  background: #fff;
  box-shadow: 0 1px 0 #e0e0e0;
`;

/* ---------- section line dialog ---------- */

const Dialog = styled.form`
  position: absolute;
  top: 0;
  left: 0;
  width: 322px;
  background: #f0f0f0;
  border: 0 solid #dcdcdc;
  border-width: 0 0 1px 0;
`;

const DialogTitle = styled.div`
  height: 24px;
  display: flex;
  align-items: center;
  padding: 0 4px 0 6px;
  background: ${BRAND};
  color: #fff;
  font-size: 14px;
  span { flex: 1; padding-left: 7px; }
`;

const DialogBody = styled.div`
  display: flex;
  flex-direction: column;
  gap: 2px;
  padding: 5px 6px 0;
`;

const Card = styled.section`
  padding: 0 8px 8px;
  background: #fff;
  border: 1px solid #d0d0d0;
  border-radius: 2px;
`;

const CardTitle = styled.button`
  height: 24px;
  width: 100%;
  margin-bottom: 6px;
  padding-bottom: 4px;
  display: flex;
  align-items: center;
  gap: 6px;
  font-size: 13px;
  font-weight: 700;
  color: ${BRAND};
`;

const Row = styled.div<{ $h: number; $top?: number }>`
  height: ${p => p.$h}px;
  margin-top: ${p => p.$top ?? 0}px;
  display: flex;
  align-items: center;
  gap: 2px;
`;

const Pick = styled.label<{ $on?: boolean }>`
  flex: 1;
  align-self: stretch;
  display: flex;
  align-items: center;
  gap: 4px;
  background: ${p => (p.$on ? '#ffe075' : 'none')};
`;

const SquareButton = styled.button<{ $size: number; $tone?: 'hot' | 'hover' }>`
  width: ${p => p.$size}px;
  height: ${p => p.$size}px;
  flex: none;
  display: grid;
  place-items: center;
  border: 1px solid ${p => (p.$tone === 'hot' ? '#f5b82e' : p.$tone === 'hover' ? '#6fb3c9' : '#6e6e6e')};
  background: ${p => (p.$tone === 'hot' ? '#ffe075' : p.$tone === 'hover' ? '#d9ecf1' : '#fff')};
`;

const CheckLabel = styled.label`
  height: 24px;
  display: flex;
  align-items: center;
  gap: 4px;
  input { width: 13px; height: 13px; margin: 0 0 0 1px; accent-color: #005fb8; }
`;

const FoldRow = styled.button`
  width: 310px;
  height: 13px;
  margin: 0 0 0 6px;
  display: grid;
  place-items: center;
  border-bottom: 1px solid #cfcfcf;
`;

const Actions = styled.div`
  display: flex;
  justify-content: flex-end;
  gap: 5px;
  padding: 9px 16px 10px;
`;

const ActionButton = styled.button<{ $primary?: boolean }>`
  width: 54px;
  height: 25px;
  border: 1px solid ${BRAND};
  background: ${p => (p.$primary ? BRAND : '#fff')};
  color: ${p => (p.$primary ? '#fff' : BRAND)};
`;

const Tooltip = styled.div`
  position: absolute;
  top: 335px;
  left: 292px;
  padding: 8px 7px;
  line-height: 15px;
  white-space: nowrap;
  background: #fff;
  border: 1px solid #a6a6a6;
`;

const Section = ({ title, children }: { title: string; children: React.ReactNode }) => (
  <Card>
    <CardTitle type="button"><Caret wide c={BRAND} />{title}</CardTitle>
    {children}
  </Card>
);

const SectionLineDialog = () => (
  <Dialog onSubmit={e => e.preventDefault()}>
    <DialogTitle>
      <Icon w={16} c="#fff" sw={2}><path d="M8 1V3M8 13V15M1 8H3M13 8H15M3 3L5 5M11 11L13 13M13 3L11 5M5 11L3 13" /><circle cx="8" cy="8" r="4.5" /></Icon>
      <span>剖切线</span>
      <QuickButton type="button" $w={18} aria-label="重置"><Icon w={14} c="#fff" sw={2}><path d="M8 2A5 5 0 1 1 2.5 7M0 7L2.5 4L5 7" /></Icon></QuickButton>
      <QuickButton type="button" $w={20} aria-label="帮助"><Icon w={12} c="#fff" sw={2}><path d="M3 3.5C3 0 9 0.5 9 3.5C9 6 6 5 6 8.5M6 10V12.5" /></Icon></QuickButton>
      <QuickButton type="button" $w={24} aria-label="关闭"><Icon w={12} c="#fff" sw={2}><path d="M1 1L11 11M11 1L1 11" /></Icon></QuickButton>
    </DialogTitle>
    <DialogBody>
      <Section title="类型">
        <Drop h={26} value="独立的" label="类型" icon={
          <Icon w={17} h={18} c="#c4122f"><path d="M1 7L3 2L5 7M2 5.5H4.5M7 3.5H10.5V7M1 16L3 11L5 16M2 14.5H4.5M7 14.5H10.5V11" /><path d="M10 10L16 3" stroke="#c58a1b" strokeWidth="2" /></Icon>
        } />
      </Section>
      <Section title="父视图">
        <Row $h={32}>
          <Pick as="span"><Check />选择视图</Pick>
          <SquareButton type="button" $size={32} aria-label="选择视图">
            <Icon><rect x="4.5" y="7.5" width="19" height="9" /><circle cx="8.5" cy="11.5" r="4" stroke="#e0202f" strokeWidth="1.5" /><path d="M8.5 3V20M0 11.5H16" /></Icon>
          </SquareButton>
        </Row>
      </Section>
      <Section title="定义">
        <Row $h={32}>
          <Pick as="span" $on><Check />选择草图 (3)</Pick>
          <SquareButton type="button" $size={24} aria-label="编辑草图">
            <Icon w={18} c={CYAN}><path d="M1 6L5 2M4.5 1V14M2 8C6 4 10 2 16 2" /><circle cx="9" cy="8" r="3.5" /><path d="M7 16L8 13L14 7L16 9L10 15Z" fill="#b98a4a" stroke="#2a2a2a" /></Icon>
          </SquareButton>
          <SquareButton type="button" $size={32} $tone="hot" aria-label="选择曲线">
            <Icon w={26} c={ORANGE}><path d="M5.5 11V24.5H23M5 11C9 5 16 2 25 2" /><path d="M1 15L5.5 10V2" stroke={CYAN} /><circle cx="16" cy="15" r="6" stroke={CYAN} strokeWidth="1.5" /></Icon>
          </SquareButton>
        </Row>
      </Section>
      <Section title="剖切方法">
        <Row $h={26}>
          <Pick htmlFor="cut-method">方法</Pick>
          <Drop id="cut-method" w={138} h={26} value="简单剖/阶梯剖" label="方法" icon={
            <Icon w={16} c={ORANGE}><path d="M1.5 3V7.5H4M0 5L1.5 3L3 5M14.5 3V7.5H12M13 5L14.5 3L16 5M7 7.5H9" /><circle cx="8" cy="8" r="4.5" stroke={CYAN} /><circle cx="8" cy="8" r="2" stroke={CYAN} /></Icon>
          } />
        </Row>
        <Row $h={24} $top={2}>
          <Pick as="span">反向</Pick>
          <SquareButton type="button" $size={24} $tone="hover" aria-label="反向">
            <Icon w={18}><rect x="0.5" y="0.5" width="17" height="17" stroke="#a03a2a" strokeDasharray="1 1" /><path d="M2 2L16 16M16 2L2 16M12 2H16V6M2 12V16H6" /></Icon>
          </SquareButton>
        </Row>
      </Section>
      <Section title="设置">
        <Row $h={32}>
          <Pick as="span">设置</Pick>
          <SquareButton type="button" $size={32} aria-label="设置">
            <svg width="26" height="26" viewBox="0 0 34 34" aria-hidden="true"><SerifA x={15} y={28} size={42} /><Brush /></svg>
          </SquareButton>
        </Row>
        <CheckLabel><input type="checkbox" defaultChecked />关联到草图</CheckLabel>
      </Section>
    </DialogBody>
    <FoldRow type="button" aria-label="折叠"><Icon w={9} h={5}><path d="M0 5L4.5 0L9 5Z" fill="#1e1e1e" stroke="none" /></Icon></FoldRow>
    <Actions>
      <ActionButton $primary>确定</ActionButton>
      <ActionButton type="button">应用</ActionButton>
      <ActionButton type="button">取消</ActionButton>
    </Actions>
    <Tooltip role="tooltip">反向</Tooltip>
  </Dialog>
);

/* ---------- status ---------- */

const StatusBar = styled.footer`
  position: relative;
  flex: none;
  height: 25px;
  padding: 0 54px 3px 3px;
  display: flex;
  align-items: center;
  justify-content: space-between;
  font-size: 11px;
  font-weight: 700;
  border-top: 1px solid #a6a6a6;
  border-bottom: 2px solid #d5ebf2;
  box-shadow: inset 0 -1px 0 #a9bcc3;
`;

const Notice = styled.button`
  position: relative;
  z-index: 1;
  display: flex;
  align-items: center;
  gap: 6px;
  font-size: 11px;
`;

const Watermark = styled.span`
  position: absolute;
  right: 4px;
  bottom: 12px;
  font-family: "Noto Sans CJK SC", sans-serif;
  font-size: 38px;
  font-weight: 300;
  line-height: 44px;
  color: rgba(226, 226, 226, 0.9);
  text-shadow: 1px 1px 1px rgba(90, 90, 90, 0.7);
  pointer-events: none;
`;

const App = () => (
  <Page>
    <GlobalStyle />
    <TitleBar />
    <RibbonBar />
    <SelectionBar />
    <Main>
      <Resource>
        {resources.map(([name, icon], i) => (
          <ResourceButton key={name} $small={i === 0} $on={i === 2} aria-label={name}>{icon}</ResourceButton>
        ))}
      </Resource>
      <PartNavigator />
      <Document>
        <TabStrip>
          <DocTab>
            <Icon w={14} c="#ddd"><path d="M0.5 3.5H9.5V13.5H0.5ZM3 3V13M8 0.5H13.5V3.5H8" fill="#444" /><circle cx="7" cy="9" r="3.5" fill={BRAND} /></Icon>
            <span>stepped_Section_View.prt</span>
            <Icon w={11} c="#fff" sw={2}><path d="M7 1H1V10H8V8" /><path d="M4 7L9 3M6 3H9V6" /></Icon>
            <QuickButton $w={10} aria-label="关闭标签"><Icon w={9} c="#b9cfd9" sw={2}><path d="M1 1L8 8M8 1L1 8" /></Icon></QuickButton>
          </DocTab>
        </TabStrip>
        <Canvas>
          <Part />
          <SectionLineDialog />
          <FloatBar>
            <Drop w={156} value="相连曲线" label="曲线规则" />
            <FlatButton $w={5} as="span" />
            <FlatButton $w={32} aria-label="在相交处停止"><Icon c={CYAN}><path d="M5.5 0V8M0 8.5H5M18.5 0V24M19 8.5H24" /><path d="M5.5 24V8.5H18" stroke={ORANGE} /></Icon></FlatButton>
            <FlatButton $w={32} aria-label="跟随圆角"><Icon c={CYAN}><path d="M5.5 0V14M0 8.5H24M18.5 0V24" /><path d="M5.5 24V14Q6 9 12 8.5" stroke={ORANGE} /></Icon></FlatButton>
            <FlatButton $w={34} aria-label="链选择"><Icon c={CYAN}><path d="M4.5 0V8M0 7.5H18M13.5 0V12" /><path d="M4.5 18V7.5H12" stroke={ORANGE} /><circle cx="12" cy="19.5" r="4" stroke={INK} /><circle cx="19.5" cy="12.5" r="4" stroke={INK} /><path d="M13 18L18 14" stroke={INK} /></Icon></FlatButton>
            <FlatButton $w={32} aria-label="更多"><Icon w={14} h={2} c="#1e1e1e" sw={2}><path d="M0 1H2M6 1H8M12 1H14" /></Icon></FlatButton>
            <FlatButton $w={5} as="span" />
            <Divider $h={26} $gap={2} />
            <CornerArrow aria-label="工具条选项"><Caret /></CornerArrow>
          </FloatBar>
        </Canvas>
      </Document>
    </Main>
    <StatusBar>
      <span>选择独立草图。</span>
      <Notice><Icon w={14} h={16}><path d="M7 1.5C3 2 4 8 3 10L1 12.5V13.5H13V12.5L11 10C10 8 11 2 7 1.5ZM5 14C5 16 9 16 9 14" /></Icon>2 通知</Notice>
      <Watermark>CSDN @山涧果子</Watermark>
    </StatusBar>
  </Page>
);

export default App;
